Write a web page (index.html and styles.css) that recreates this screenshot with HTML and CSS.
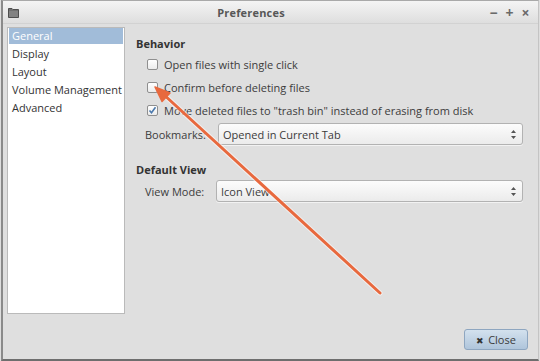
FILE: index.html
```html
<!DOCTYPE html>
<html>
<head>
	<title>Preferences</title>
	<meta charset="utf-8">
	<link rel="stylesheet" href="styles.css">
</head>
<body>
  <div class="window">
  	<div class="titlebar">
  		<svg class="app-icon" width="11" height="11" viewBox="0 0 11 11">
  			<path d="M0.5 1.5 h3.5 l1 1 h5.5 v8 h-10 z" fill="#707070" stroke="#4e4e4e" stroke-width="1"/>
  			<rect x="1" y="4" width="9" height="6" fill="#828282"/>
  		</svg>
  		<div class="title">Preferences</div>
  		<div class="controls">
  			<span class="ctl">&minus;</span>
  			<span class="ctl">+</span>
  			<span class="ctl">&times;</span>
  		</div>
  	</div>
  	<div class="content">
  		<ul class="sidebar">
  			<li class="selected">General</li>
  			<li>Display</li>
  			<li>Layout</li>
  			<li>Volume Management</li>
  			<li>Advanced</li>
  		</ul>
  		<div class="page">
  			<div class="heading">Behavior</div>
  			<div class="check"><span class="box"></span>Open files with single click</div>
  			<div class="check"><span class="box"></span>Confirm before deleting files</div>
  			<div class="check"><span class="box">
  				<svg width="9" height="9" viewBox="0 0 9 9"><path d="M1.5 4.5 l2 2.3 l4 -5.6" fill="none" stroke="#4a78ac" stroke-width="1.6"/></svg>
  			</span>Move deleted files to "trash bin" instead of erasing from disk</div>
  			<div class="field">
  				<label class="bm-label">Bookmarks:</label>
  				<div class="combo">
  					<span>Opened in Current Tab</span>
  					<svg class="spin" width="5" height="9" viewBox="0 0 5 9"><path d="M0 3 L2.5 0 L5 3 Z M0 6 L2.5 9 L5 6 Z" fill="#555"/></svg>
  				</div>
  			</div>
  			<div class="heading second">Default View</div>
  			<div class="field">
  				<label class="vm-label">View Mode:</label>
  				<div class="combo">
  					<span>Icon View</span>
  					<svg class="spin" width="5" height="9" viewBox="0 0 5 9"><path d="M0 3 L2.5 0 L5 3 Z M0 6 L2.5 9 L5 6 Z" fill="#555"/></svg>
  				</div>
  			</div>
  		</div>
  	</div>
  	<div class="footer">
  		<button class="close"><span class="x">&#10006;</span>Close</button>
  	</div>
  	<svg class="arrow" width="540" height="361" viewBox="0 0 540 361">
  		<line x1="380" y1="293" x2="162" y2="93" stroke="#fff" stroke-opacity="0.55" stroke-width="5" stroke-linecap="round"/>
  		<line x1="380" y1="293" x2="162" y2="93" stroke="#e8693e" stroke-width="3" stroke-linecap="round"/>
  		<path d="M155 87 L170 93 L162 101.5 Z" fill="#e8693e" stroke="#e8693e" stroke-width="1.5" stroke-linejoin="round"/>
  	</svg>
  </div>
</body>
</html>
```

FILE: styles.css
```css
body {
	margin: 0;
	font-family: "Open Sans", "Noto Sans", sans-serif;
	font-size: 11px;
	color: #3c3c3c;
	background: #dedede;
}
.window {
	position: relative;
	width: 535px;
	height: 358px;
	border: 1px solid #8a8a8a;
	border-top-color: #a9a9a9;
	border-right-color: #c4c4c4;
	border-bottom: 2px solid #6e6e6e;
	border-left: 2px solid #8a8a8a;
	margin-left: 1px;
	background: #dfdfdf;
	display: flex;
	flex-direction: column;
}
.titlebar {
	height: 22px;
	display: flex;
	align-items: center;
	background: linear-gradient(#f4f4f4, #dedede);
	border-bottom: 1px solid #d2d2d2;
	padding: 0 8px 0 5px;
}
.app-icon {
	margin-top: 1px;
}
.title {
	flex: 1;
	text-align: center;
	font-weight: bold;
	font-size: 11px;
	color: #575757;
	letter-spacing: 0.2px;
	padding-right: 6px;
}
.controls {
	display: flex;
	gap: 7px;
	color: #6a6a6a;
	font-size: 14px;
	font-weight: bold;
}
.ctl {
	width: 9px;
	text-align: center;
}
.content {
	flex: 1;
	display: flex;
	padding: 3px 0 0 4px;
}
.sidebar {
	list-style: none;
	margin: 0;
	padding: 0 1px;
	width: 114px;
	height: 285px;
	background: #fff;
	border: 1px solid #bababa;
}
.sidebar li {
	height: 16px;
	line-height: 16px;
	padding: 0 0 2px 3px;
	color: #333;
	white-space: nowrap;
}
.sidebar li.selected {
	background: #a1bcd9;
	background-clip: content-box;
	color: #fff;
	padding-left: 0;
	text-indent: 3px;
}
.page {
	flex: 1;
	padding: 8px 15px 0 11px;
}
.heading {
	font-weight: bold;
	height: 18px;
	line-height: 18px;
	color: #333;
}
.heading.second {
	margin-top: 16px;
}
.check {
	display: flex;
	align-items: center;
	height: 23px;
	padding-left: 11px;
	white-space: nowrap;
}
.box {
	width: 9px;
	height: 9px;
	border: 1px solid #8f8f8f;
	border-radius: 2px;
	background: linear-gradient(#fff, #ececec);
	margin-right: 6px;
	display: flex;
}
.field {
	display: flex;
	align-items: center;
	height: 22px;
	margin-top: 1px;
	padding-left: 9px;
}
.bm-label {
	width: 73px;
}
.vm-label {
	width: 71px;
}
.combo {
	flex: 1;
	height: 20px;
	display: flex;
	align-items: center;
	justify-content: space-between;
	border: 1px solid #b2b2b2;
	border-radius: 3px;
	background: linear-gradient(#fcfcfc, #ebebeb);
	padding: 0 6px 0 4px;
	box-shadow: 0 1px 0 #f2f2f2;
}
.footer {
	display: flex;
	justify-content: flex-end;
	padding: 0 10px 9px 0;
}
.close {
	width: 64px;
	height: 21px;
	font-family: inherit;
	font-size: 11px;
	color: #3b3b3b;
	border: 1px solid #8ea6c0;
	border-radius: 3px;
	background: linear-gradient(#d3e1ee, #afc5db);
	padding: 0;
}
.close .x {
	font-size: 9px;
	color: #333;
	margin-right: 4px;
}
.arrow {
	position: absolute;
	left: -3px;
	top: -1px;
	pointer-events: none;
}
```
